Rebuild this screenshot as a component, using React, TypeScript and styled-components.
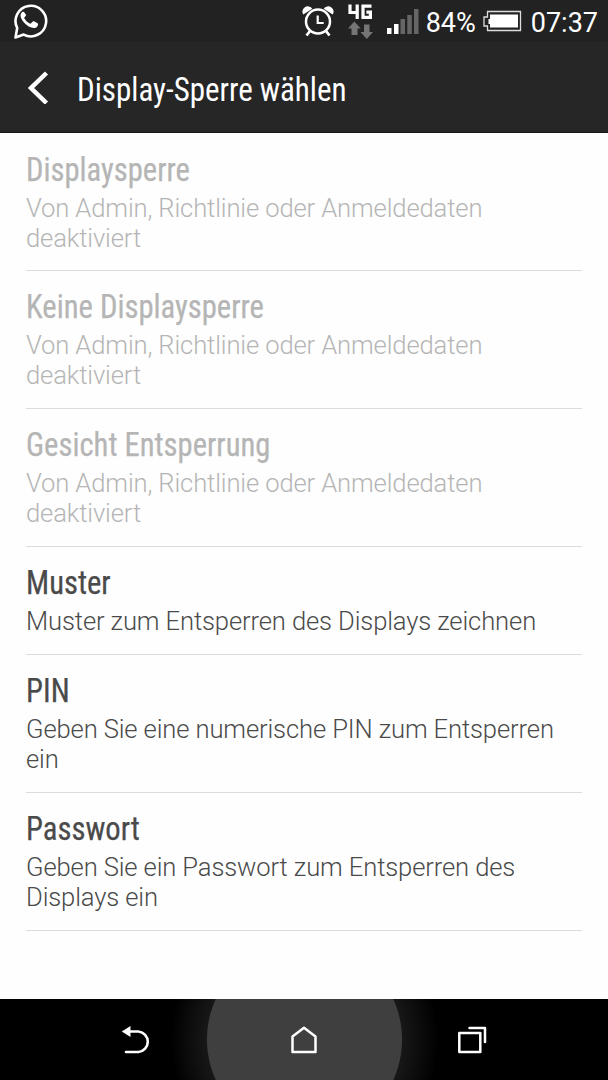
import React from "react";
import styled, { createGlobalStyle } from "styled-components";

const GlobalStyle = createGlobalStyle`
  * { box-sizing: border-box; }
  html, body { margin: 0; padding: 0; background: #fff; }
  body { font-family: Roboto, "Liberation Sans", sans-serif; }
`;

const Screen = styled.div`
  width: 608px;
  height: 1080px;
  display: flex;
  flex-direction: column;
  background: #fefefe;
  overflow: hidden;
`;

const StatusBar = styled.div`
  height: 42px;
  flex: none;
  display: flex;
  align-items: center;
  background: #222;
  color: #fff;
  padding: 0 10px 0 12px;
  svg { display: block; flex: none; }
`;

const Spacer = styled.div<{ $width?: number }>`
  flex: ${(p) => (p.$width ? `0 0 ${p.$width}px` : "1")};
`;

const StatusText = styled.span<{ $gap: number }>`
  font-size: 27px;
  line-height: 42px;
  padding-top: 3px;
  margin-left: ${(p) => p.$gap}px;
  white-space: nowrap;
`;

const ActionBar = styled.header`
  height: 91px;
  flex: none;
  display: flex;
  align-items: center;
  background: #262626;
  border-bottom: 1px solid #181818;
  color: #fff;
  padding-left: 28px;
  svg { display: block; flex: none; }
`;

const Condensed = styled.div`
  font-family: "Roboto Condensed", Roboto, sans-serif;
  font-stretch: 75%;
  font-size: 33px;
  font-weight: 400;
  line-height: 38px;
  white-space: nowrap;
  transform-origin: 0 50%;
`;

const BarTitle = styled(Condensed)`
  margin-left: 28px;
  padding-top: 5px;
  transform: scaleX(0.94);
`;

const List = styled.main`
  flex: 1;
  padding: 0 26px;
`;

const Item = styled.section<{ $disabled: boolean }>`
  padding: 17px 0 18px;
  border-bottom: 1px solid #dcdcdc;
  color: ${(p) => (p.$disabled ? "#b5b5b5" : "#4a4a4a")};

  &:first-child {
    padding: 18px 0 17px;
  }
`;

const ItemTitle = styled(Condensed)`
  margin-bottom: 4px;
  -webkit-text-stroke: 0.25px currentColor;
  transform: scaleX(0.928);
`;

const ItemText = styled.div`
  font-size: 25.6px;
  font-weight: 300;
  line-height: 30px;
  letter-spacing: -0.13px;
`;

const NavBar = styled.nav`
  height: 81px;
  flex: none;
  display: flex;
  align-items: center;
  justify-content: center;
  background: radial-gradient(circle at 304.5px 40.5px, #3f3f3f 97px, #171717 98px, #0b0b0b 118px, #000 134px);
  svg { display: block; flex: none; }
`;

const NavKey = styled.div`
  width: 168px;
  display: flex;
  justify-content: center;
`;

const items: { title: string; lines: string[]; disabled: boolean }[] = [
  { title: "Displaysperre", lines: ["Von Admin, Richtlinie oder Anmeldedaten", "deaktiviert"], disabled: true },
  { title: "Keine Displaysperre", lines: ["Von Admin, Richtlinie oder Anmeldedaten", "deaktiviert"], disabled: true },
  { title: "Gesicht Entsperrung", lines: ["Von Admin, Richtlinie oder Anmeldedaten", "deaktiviert"], disabled: true },
  { title: "Muster", lines: ["Muster zum Entsperren des Displays zeichnen"], disabled: false },
  { title: "PIN", lines: ["Geben Sie eine numerische PIN zum Entsperren", "ein"], disabled: false },
  { title: "Passwort", lines: ["Geben Sie ein Passwort zum Entsperren des", "Displays ein"], disabled: false },
];

const MessengerIcon = () => (
  <svg width="36" height="40" viewBox="0.800 1 36 40" fill="none">
    <path d="M4.300 37.500 6 28A15.300 15.300 0 1 1 12.500 34.600Z" stroke="#fff" strokeWidth="2.600" strokeLinejoin="round" />
    <path
      d="M13.200 12.600c-.6-1-1.600-.9-2.400-.3-1.400 1.200-1.800 3.300-1.100 5.200 1.800 4.800 6.600 9.200 11.500 10.300 2.300.5 4.700-.3 5.500-2.400.3-.9.3-1.800-.3-2.200l-3.600-1.900c-.7-.3-1.100-.1-1.600.5l-1.300 1.500c-.4.4-.8.4-1.300.2-2.200-1-4.100-2.700-5.400-4.900-.3-.5-.2-.9.200-1.300l1.200-1.500c.3-.4.3-.8.1-1.300z"
      fill="#fff"
    />
  </svg>
);

const AlarmIcon = () => (
  <svg width="32" height="32" viewBox="0 0 32 32" fill="none" stroke="#fff">
    <circle cx="16" cy="16.500" r="12" strokeWidth="2.500" />
    <path d="M15.700 10.500V18h6" strokeWidth="2.200" />
    <path d="m8 26-3.500 4.500M24 26l3.500 4.500" strokeWidth="2.800" />
    <path d="M1.300 9.600A5.300 5.300 0 0 1 10.300 3.700ZM30.700 9.600A5.300 5.300 0 0 0 21.700 3.700Z" fill="#fff" stroke="none" />
  </svg>
);

const NetworkIcon = () => (
  <svg width="26" height="36" viewBox="0 0 26 36" fill="none">
    <path d="M2 1.500v8h8M9.200 1.500V16" stroke="#fff" strokeWidth="3.200" />
    <path d="M23.500 3.100H15V14.400h7.400V9.200h-4" stroke="#fff" strokeWidth="3.200" />
    <path d="M6.300 18.500 0 25.500h3.500V32h6v-6.500h3.300zM18.800 36l-6.300-7H16v-7.500h5.500V29H25z" fill="#757575" />
  </svg>
);

const SignalIcon = () => (
  <svg width="32" height="26" viewBox="0 0 32 26">
    <path d="M0 20h4.500v6H0zM7 16h4.500v10H7z" fill="#fff" />
    <path d="M13.500 11H18v15h-4.500zM20.300 7h4.500v19h-4.500zM27 1h4.500v25H27z" fill="#666" />
  </svg>
);

const BatteryIcon = () => (
  <svg width="39" height="22" viewBox="0 0 39 22" fill="none">
    <path d="M4.500 1.500h33v19h-33v-4.500H1V7h3.500z" stroke="#ddd" strokeWidth="1.300" />
    <path d="M7 4.500h28v13H7v-3.500H5.500V9H7z" fill="#fff" />
  </svg>
);

export default function App() {
  return (
    <>
      <GlobalStyle />
      <Screen>
        <StatusBar>
          <MessengerIcon />
          <Spacer />
          <AlarmIcon />
          <Spacer $width={14} />
          <NetworkIcon />
          <Spacer $width={13} />
          <SignalIcon />
          <StatusText $gap={7}>84%</StatusText>
          <Spacer $width={7} />
          <BatteryIcon />
          <StatusText $gap={9}>07:37</StatusText>
        </StatusBar>
        <ActionBar>
          <svg width="21" height="34" viewBox="0 0 21 34" fill="none">
            <path d="M18.500 3 3 18l15.500 15" stroke="#fff" strokeWidth="4.500" />
          </svg>
          <BarTitle>Display-Sperre wählen</BarTitle>
        </ActionBar>
        <List>
          {items.map((item) => (
            <Item key={item.title} $disabled={item.disabled}>
              <ItemTitle>{item.title}</ItemTitle>
              {item.lines.map((line) => (
                <ItemText key={line}>{line}</ItemText>
              ))}
            </Item>
          ))}
        </List>
        <NavBar>
          <NavKey>
            <svg width="30" height="30" viewBox="0 0 30 30" fill="none">
              <path d="M8 6.500h9.500a10.300 10.300 0 0 1 0 20.500H5" stroke="#fff" strokeWidth="2.600" strokeLinecap="round" />
              <path d="M.8 6.500 9.500 1v11z" fill="#fff" />
            </svg>
          </NavKey>
          <NavKey>
            <svg width="30" height="30" viewBox="0 0 30 30" fill="none">
              <path d="M15 2.800 26.500 11.500V27h-23V11.500z" stroke="#fff" strokeWidth="2.500" strokeLinejoin="round" />
            </svg>
          </NavKey>
          <NavKey>
            <svg width="30" height="30" viewBox="0 0 30 30" fill="none" stroke="#fff" strokeWidth="2.500" strokeLinejoin="round" strokeLinecap="round">
              <path d="M2.300 8h21v19h-21zM12.500 3H28v14" />
            </svg>
          </NavKey>
        </NavBar>
      </Screen>
    </>
  );
}
